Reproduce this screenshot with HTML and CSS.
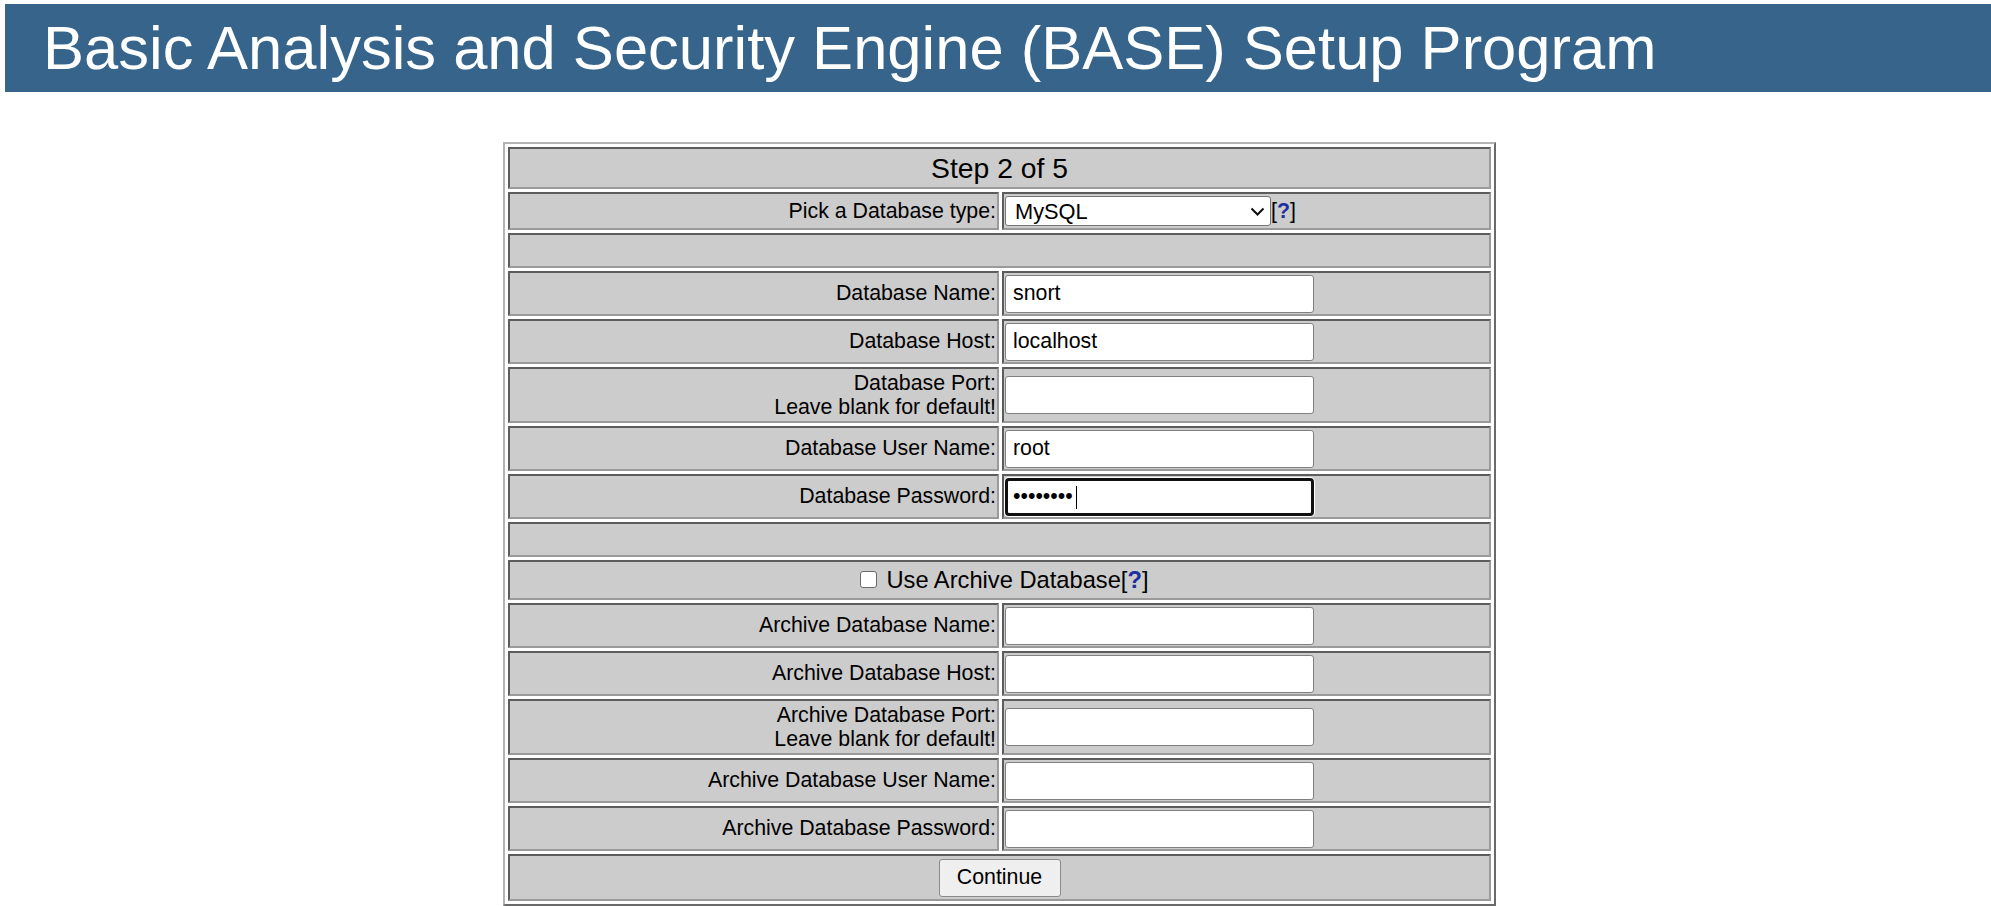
FILE: index.html
```html
<!DOCTYPE html>
<html lang="en">
<head>
    <meta charset="UTF-8">
    <title>BASE Setup Program</title>
    <link rel="stylesheet" href="styles.css">
</head>
<body>

<div class="header">
    <h1>Basic Analysis and Security Engine (BASE) Setup Program</h1>
</div>

<div class="content">
<form action="#" method="post">
<table class="setup">
    <tr><td colspan="2" class="step">Step 2 of 5</td></tr>
    <tr>
        <td class="label">Pick a Database type:</td>
        <td class="field">
            <div class="pick">
                <span class="select-wrap">
                    <select name="dbtype">
                        <option value="mysql" selected>MySQL</option>
                        <option value="postgres">PostgreSQL</option>
                        <option value="mssql">Microsoft SQL Server</option>
                        <option value="oci8">Oracle</option>
                    </select>
                    <svg class="chevron" width="15" height="9" viewBox="0 0 15 9"><path d="M1.5 1.5 L7.5 7.5 L13.5 1.5" fill="none" stroke="#111" stroke-width="2"/></svg>
                </span>
                <span class="help">[<a href="#">?</a>]</span>
            </div>
        </td>
    </tr>
    <tr><td colspan="2" class="blank"><div class="gap"></div></td></tr>
    <tr>
        <td class="label">Database Name:</td>
        <td class="field"><input type="text" name="dbname" value="snort"></td>
    </tr>
    <tr>
        <td class="label">Database Host:</td>
        <td class="field"><input type="text" name="dbhost" value="localhost"></td>
    </tr>
    <tr>
        <td class="label">Database Port:<br>Leave blank for default!</td>
        <td class="field"><input type="text" name="dbport" value=""></td>
    </tr>
    <tr>
        <td class="label">Database User Name:</td>
        <td class="field"><input type="text" name="dbusername" value="root"></td>
    </tr>
    <tr>
        <td class="label">Database Password:</td>
        <td class="field">
            <span class="pw-wrap">
                <input type="password" name="dbpasswd" value="password" class="focused">
                <span class="caret"></span>
            </span>
        </td>
    </tr>
    <tr><td colspan="2" class="blank"><div class="gap"></div></td></tr>
    <tr>
        <td colspan="2" class="archive">
            <div class="archive-line">
                <input type="checkbox" name="usearchive" id="usearchive">
                <label for="usearchive">Use Archive Database<span class="help">[<a href="#">?</a>]</span></label>
            </div>
        </td>
    </tr>
    <tr>
        <td class="label">Archive Database Name:</td>
        <td class="field"><input type="text" name="arcdbname"></td>
    </tr>
    <tr>
        <td class="label">Archive Database Host:</td>
        <td class="field"><input type="text" name="arcdbhost"></td>
    </tr>
    <tr>
        <td class="label">Archive Database Port:<br>Leave blank for default!</td>
        <td class="field"><input type="text" name="arcdbport"></td>
    </tr>
    <tr>
        <td class="label">Archive Database User Name:</td>
        <td class="field"><input type="text" name="arcdbusername"></td>
    </tr>
    <tr>
        <td class="label">Archive Database Password:</td>
        <td class="field"><input type="password" name="arcdbpasswd"></td>
    </tr>
    <tr>
        <td colspan="2" class="submit">
            <div class="submit-line"><button type="submit">Continue</button></div>
        </td>
    </tr>
</table>
</form>
</div>

</body>
</html>
```

FILE: styles.css
```css
body {
    margin: 0;
    background: #fff;
    color: #000;
    font-family: "Liberation Sans", Arial, sans-serif;
}
.header {
    margin: 4px 0 0 5px;
    height: 88px;
    background-color: #36648b;
}
.header h1 {
    margin: 0;
    padding: 9px 0 0 38px;
    font-size: 61.5px;
    font-weight: normal;
    line-height: 70px;
    color: #fff;
    white-space: nowrap;
}
.content {
    padding-left: 8px;
}
.setup {
    width: 993px;
    margin: 50px auto 0;
    border-collapse: separate;
    border-spacing: 3px;
    border: 2px solid;
    border-color: #b4b4b4 #6a6a6a #6a6a6a #b4b4b4;
    background: #fff;
}
.setup td {
    background: #cccccc;
    border: 2px solid;
    border-color: #5c5c5c #9a9a9a #9a9a9a #5c5c5c;
    padding: 1.5px 1px;
    font-size: 21.33px;
    line-height: 24.5px;
    vertical-align: middle;
}
.setup td.label {
    width: 485px;
    text-align: right;
}
.setup td.step {
    text-align: center;
    font-size: 28.3px;
    line-height: 35px;
}
.gap {
    height: 28px;
}
.field input[type="text"],
.field input[type="password"] {
    display: block;
    width: 309px;
    height: 38px;
    box-sizing: border-box;
    margin: 0;
    padding: 0 7px;
    border: 1px solid #808080;
    border-radius: 3px;
    background: #fff;
    color: #000;
    font-family: "Liberation Sans", Arial, sans-serif;
    font-size: 21.33px;
}
.field input.focused {
    border: 3px solid #101010;
    border-radius: 4px;
    padding: 0 5px;
    outline: none;
    box-shadow: 0 0 0 1px #fff;
}
.pw-wrap {
    position: relative;
    display: block;
    width: 309px;
}
.caret {
    position: absolute;
    left: 71px;
    top: 8px;
    width: 1px;
    height: 23px;
    background: #000;
}
.pick {
    display: flex;
    align-items: center;
    height: 31px;
}
.select-wrap {
    position: relative;
    display: inline-block;
}
.select-wrap select {
    display: block;
    appearance: none;
    -webkit-appearance: none;
    width: 266px;
    height: 30px;
    box-sizing: border-box;
    margin: 0;
    padding: 0 9px;
    border: 1px solid #767676;
    border-radius: 3px;
    background: #fff;
    color: #000;
    font-family: "Liberation Sans", Arial, sans-serif;
    font-size: 21.8px;
}
.chevron {
    position: absolute;
    right: 6px;
    top: 11px;
    pointer-events: none;
}
.help {
    color: #000;
}
.help a {
    color: #1e2f9e;
    font-weight: bold;
    text-decoration: none;
}
.archive-line {
    display: flex;
    align-items: center;
    justify-content: center;
    height: 33px;
    padding-left: 10px;
    font-size: 23.7px;
}
.archive-line input[type="checkbox"] {
    appearance: none;
    -webkit-appearance: none;
    width: 17px;
    height: 17px;
    margin: 0 9px 2px 0;
    border: 1.5px solid #6a6a6a;
    border-radius: 3px;
    background: #fff;
}
.submit-line {
    display: flex;
    justify-content: center;
    align-items: center;
    height: 40px;
}
.submit-line button {
    width: 122px;
    height: 38px;
    margin: 0;
    padding: 0;
    border: 1px solid #8a8a8a;
    border-radius: 3px;
    background: #efefef;
    color: #000;
    font-family: "Liberation Sans", Arial, sans-serif;
    font-size: 21.33px;
}
```
